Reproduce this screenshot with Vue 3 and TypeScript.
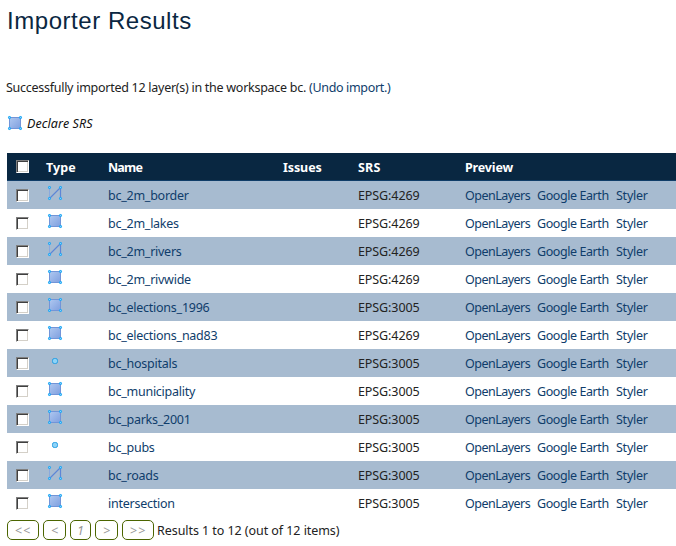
<script setup lang="ts">
type Geometry = 'line' | 'polygon' | 'point'

interface Layer {
  name: string
  type: Geometry
  srs: string
}

const layers: Layer[] = [
  { name: 'bc_2m_border', type: 'line', srs: 'EPSG:4269' },
  { name: 'bc_2m_lakes', type: 'polygon', srs: 'EPSG:4269' },
  { name: 'bc_2m_rivers', type: 'line', srs: 'EPSG:4269' },
  { name: 'bc_2m_rivwide', type: 'polygon', srs: 'EPSG:4269' },
  { name: 'bc_elections_1996', type: 'polygon', srs: 'EPSG:3005' },
  { name: 'bc_elections_nad83', type: 'polygon', srs: 'EPSG:4269' },
  { name: 'bc_hospitals', type: 'point', srs: 'EPSG:3005' },
  { name: 'bc_municipality', type: 'polygon', srs: 'EPSG:3005' },
  { name: 'bc_parks_2001', type: 'polygon', srs: 'EPSG:3005' },
  { name: 'bc_pubs', type: 'point', srs: 'EPSG:3005' },
  { name: 'bc_roads', type: 'line', srs: 'EPSG:3005' },
  { name: 'intersection', type: 'polygon', srs: 'EPSG:3005' },
]

const pages = [
  { label: '<<', kind: 'wide' },
  { label: '<', kind: 'step' },
  { label: '1', kind: 'number' },
  { label: '>', kind: 'step' },
  { label: '>>', kind: 'wide' },
]
</script>

<template>
  <svg class="defs" width="0" height="0">
    <defs>
      <linearGradient id="fill" x1="0" y1="0" x2="1" y2="1">
        <stop offset="0" stop-color="#afc8f0" />
        <stop offset="1" stop-color="#7f9fdf" />
      </linearGradient>
      <symbol id="polygon" viewBox="0 0 16 16">
        <rect x="2.5" y="2.5" width="11" height="11" fill="url(#fill)" stroke="#7294d8" />
        <g fill="#7fd4ff" stroke="#1ba5f5">
          <rect x="1.5" y="1.5" width="2" height="2" rx=".6" />
          <rect x="12.5" y="1.5" width="2" height="2" rx=".6" />
          <rect x="1.5" y="12.5" width="2" height="2" rx=".6" />
          <rect x="12.5" y="12.5" width="2" height="2" rx=".6" />
        </g>
      </symbol>
      <symbol id="line" viewBox="0 0 16 16">
        <path d="M2.5 3v10" fill="none" stroke="#8aa9dd" />
        <path d="M2.5 13.5l11-11v11" fill="none" stroke="#5d86d6" stroke-width="1.2" />
        <g fill="#7fd4ff" stroke="#1ba5f5">
          <rect x="1.5" y="1.5" width="2" height="2" rx=".6" />
          <rect x="12.5" y="1.5" width="2" height="2" rx=".6" />
          <rect x="1.5" y="12.5" width="2" height="2" rx=".6" />
          <rect x="12.5" y="12.5" width="2" height="2" rx=".6" />
        </g>
      </symbol>
      <symbol id="point" viewBox="0 0 16 16">
        <rect x="5.5" y="5.5" width="5" height="5" rx="1.8" fill="#8dd3f8" stroke="#2a9fe2" />
      </symbol>
    </defs>
  </svg>
  <main class="page">
    <h1>Importer Results</h1>
    <p class="status">
      <span>Successfully imported 12 layer(s) in the workspace bc. </span><a>(Undo import.)</a>
    </p>
    <div class="declare">
      <svg class="icon"><use href="#polygon" /></svg>
      <em>Declare SRS</em>
    </div>

    <div class="table">
      <div class="row head">
        <i class="check"></i>
        <b class="h-type">Type</b>
        <b class="h-name">Name</b>
        <b class="h-issues">Issues</b>
        <b class="h-srs">SRS</b>
        <b class="h-preview">Preview</b>
      </div>
      <div v-for="layer in layers" :key="layer.name" class="row">
        <i class="check"></i>
        <svg class="icon"><use :href="'#' + layer.type" /></svg>
        <a class="name">{{ layer.name }}</a>
        <span></span>
        <span class="srs">{{ layer.srs }}</span>
        <span class="preview">
          <a class="ol">OpenLayers</a><a class="ge">Google Earth</a><a class="st">Styler</a>
        </span>
      </div>
    </div>

    <div class="pager">
      <span v-for="page in pages" :key="page.label" class="page-button" :class="page.kind">{{ page.label }}</span>
      <span class="summary">Results 1 to 12 (out of 12 items)</span>
    </div>
  </main>
</template>

<style>
body {
  background: #fff;
  overflow: hidden;
}
</style>

<style scoped>
.defs {
  position: absolute;
}
.page {
  box-sizing: border-box;
  width: 676px;
  height: 546px;
  padding-left: 7px;
  font: 12.5px/30px "Noto Sans", "DejaVu Sans", sans-serif;
  color: #222;
  white-space: nowrap;
  overflow: hidden;
}
h1 {
  margin: 0;
  padding-top: 6px;
  height: 67px;
  font: 400 24px/30px "Liberation Sans", Arial, sans-serif;
  letter-spacing: 0.54px;
  color: #0a2742;
}
a {
  color: #0f3d6b;
}
.status {
  margin: 0 0 0 -1px;
  height: 29px;
  letter-spacing: -0.27px;
  white-space: pre;
}
.status a {
  letter-spacing: -0.34px;
}
.declare {
  display: flex;
  height: 28px;
  margin: 7px 0 16px;
}
.declare .icon {
  margin-top: 6px;
}
.declare em {
  margin-left: 4px;
  letter-spacing: 0.1px;
  color: #111;
}
.icon {
  display: block;
  width: 16px;
  height: 16px;
}
.row {
  display: grid;
  grid-template-columns: 40px 61px 175px 75px 107px 1fr;
  height: 28px;
}
.row:nth-child(even) {
  background: #a7bbd0;
}
.row.head {
  box-sizing: border-box;
  background: #092741;
  border-bottom: 1px solid #103d68;
  color: #fff;
}
.row .icon {
  margin-top: 4px;
}
.h-type {
  margin-left: -1px;
  letter-spacing: 0.1px;
}
.h-name {
  letter-spacing: -0.8px;
}
.h-issues {
  letter-spacing: -0.1px;
}
.h-srs {
  letter-spacing: 0.2px;
}
.h-preview {
  letter-spacing: -0.15px;
}
.name {
  letter-spacing: -0.25px;
}
.srs {
  letter-spacing: -0.1px;
}
.check {
  box-sizing: border-box;
  width: 13px;
  height: 13px;
  margin: 8px 0 0 9px;
  background: #fff;
  border: 1px solid;
  border-color: #808080 #fff #fff #808080;
  box-shadow: inset 1px 1px #404040, inset -1px -1px #d4d0c8;
}
.head .check {
  margin-top: 7px;
}
.preview {
  display: flex;
}
.ol {
  width: 72px;
  letter-spacing: -0.52px;
}
.ge {
  width: 79px;
  letter-spacing: -0.42px;
}
.st {
  letter-spacing: -0.25px;
}
.pager {
  display: flex;
  padding-top: 3px;
  gap: 4px;
  line-height: 22px;
}
.page-button {
  box-sizing: border-box;
  height: 20px;
  border: 1px solid #4b6500;
  border-radius: 5px;
  font-style: italic;
  line-height: 20px;
  text-align: center;
  color: #999;
}
.wide {
  width: 32px;
  letter-spacing: 1px;
}
.step {
  width: 23px;
}
.number {
  width: 21px;
}
.summary {
  margin-left: -1px;
  letter-spacing: -0.06px;
}
</style>
